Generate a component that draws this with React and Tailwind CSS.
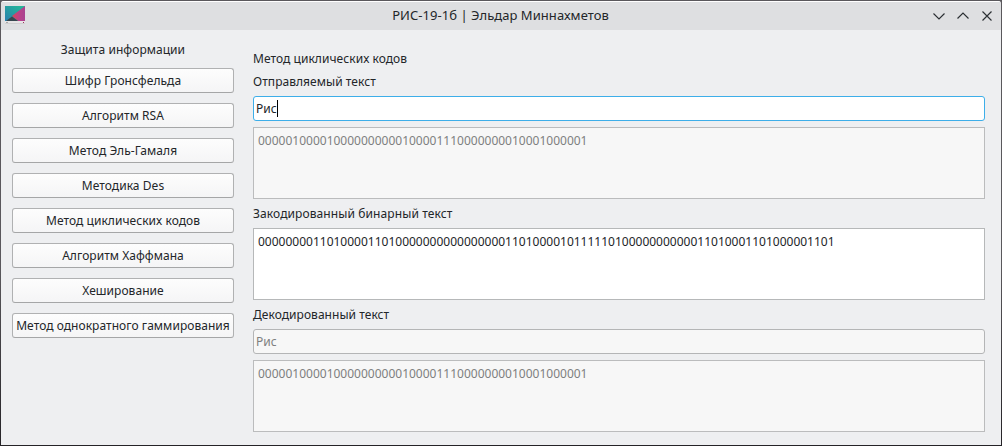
const METHODS = [
  "Шифр Гронсфельда",
  "Алгоритм RSA",
  "Метод Эль-Гамаля",
  "Методика Des",
  "Метод циклических кодов",
  "Алгоритм Хаффмана",
  "Хеширование",
  "Метод однократного гаммирования",
];

const SOURCE_BITS = "000001000010000000000100001110000000010001000001";
const ENCODED_BITS =
  "0000000011010000110100000000" +
  "0000000011010000101111101000" +
  "0000000011010001101000001101";

function AppIcon() {
  return (
    <svg width="20" height="18" viewBox="0 0 20 18">
      <defs>
        <linearGradient id="teal" x1="0" y1="1" x2="1" y2="0">
          <stop offset="0" stopColor="#2a7fae" />
          <stop offset="1" stopColor="#22bd96" />
        </linearGradient>
        <linearGradient id="pink" x1="0" y1="0" x2="1" y2="0">
          <stop offset="0" stopColor="#d8435a" />
          <stop offset="0.6" stopColor="#b8428a" />
          <stop offset="1" stopColor="#a94391" />
        </linearGradient>
      </defs>
      <rect width="20" height="15" fill="url(#teal)" />
      <path d="M20 0V15H13L7 10Z" fill="url(#pink)" />
      <path d="M7 10.5L13 15H1Z" fill="#37474f" />
      <rect y="15" width="20" height="2" fill="#e6e4e5" />
      <rect x="1" y="16" width="2" height="1" fill="#a8a8a8" />
      <rect x="18" y="16" width="1" height="1" fill="#a03060" />
      <rect y="17" width="20" height="1" fill="#d0d0d1" />
    </svg>
  );
}

function WindowButton({ d }) {
  return (
    <button className="flex h-6 w-6 items-center justify-center">
      <svg width="12" height="12" viewBox="0 0 12 12" fill="none" stroke="#2c3034" strokeWidth="1.15">
        <path d={d} />
      </svg>
    </button>
  );
}

function TextArea({ children, disabled }) {
  return (
    <div
      className={
        disabled
          ? "h-[72px] border border-[#bbbcbd] bg-[#f7f7f7] px-1 pt-[5px] leading-4 text-[#7e7f80]"
          : "h-[72px] border border-[#b6b8b9] bg-white px-1 pt-[5px] leading-4"
      }
    >
      {children}
    </div>
  );
}

export default function App() {
  return (
    <div className="h-[446px] w-[1002px] overflow-hidden bg-linear-to-b from-[#5a585c] from-60% to-[#252327] p-px font-['Noto_Sans',sans-serif] text-xs text-[#232629]">
      <div className="flex h-full flex-col overflow-hidden rounded-t-[3px] bg-[#eeeff1]">
        <header className="flex h-[29px] shrink-0 items-center border-t border-white bg-[#dedfe1] pr-0.5 pl-1">
          <div className="mb-0.5 w-[69px]">
            <AppIcon />
          </div>
          <h1 className="mb-0.5 flex-1 text-center text-[13px] leading-4 tracking-[0.05px]">
            РИС-19-1б | Эльдар Миннахметов
          </h1>
          <div className="flex w-[72px]">
            <WindowButton d="M.5 3.5 6 9l5.5-5.5" />
            <WindowButton d="M.5 8.5 6 3l5.5 5.5" />
            <WindowButton d="m1.5 1.5 9 9m0-9-9 9" />
          </div>
        </header>

        <main className="flex flex-1 gap-[19px] pl-[11px]">
          <nav className="flex w-[222px] flex-col pt-3 tracking-[0.05px]">
            <h2 className="mb-2.5 text-center leading-4">Защита информации</h2>
            <div className="flex flex-col gap-[10px]">
              {METHODS.map((name) => (
                <button
                  key={name}
                  className="flex h-[25px] items-center justify-center rounded-[3px] border border-[#b0b1b2] border-b-[#a5a6a7] bg-linear-to-b from-[#fdfdfd] to-[#f5f5f6] leading-4 whitespace-nowrap"
                >
                  {name}
                </button>
              ))}
            </div>
          </nav>

          <section className="flex w-[732px] flex-col pt-[21px]">
            <h2 className="leading-4 tracking-[0.05px]">Метод циклических кодов</h2>
            <label className="mt-[7px] mb-[6px] leading-4 tracking-[0.05px]">Отправляемый текст</label>
            <div className="mb-[6px] flex h-[25px] items-center rounded-[3px] border border-[#3daee9] bg-white pl-0.5 leading-4">
              Рис
              <span className="h-[17px] w-px bg-black" />
            </div>
            <TextArea disabled>{SOURCE_BITS}</TextArea>
            <label className="mt-[7px] mb-[6px] leading-4 tracking-[0.1px]">Закодированный бинарный текст</label>
            <TextArea>{ENCODED_BITS}</TextArea>
            <label className="mt-[7px] mb-[6px] leading-4 tracking-[0.05px]">Декодированный текст</label>
            <div className="mb-[6px] flex h-[25px] items-center rounded-[3px] border border-[#b4b5b6] bg-[#f7f7f7] pl-0.5 leading-4 text-[#7e7f80]">
              Рис
            </div>
            <TextArea disabled>{SOURCE_BITS}</TextArea>
          </section>
        </main>
      </div>
    </div>
  );
}
